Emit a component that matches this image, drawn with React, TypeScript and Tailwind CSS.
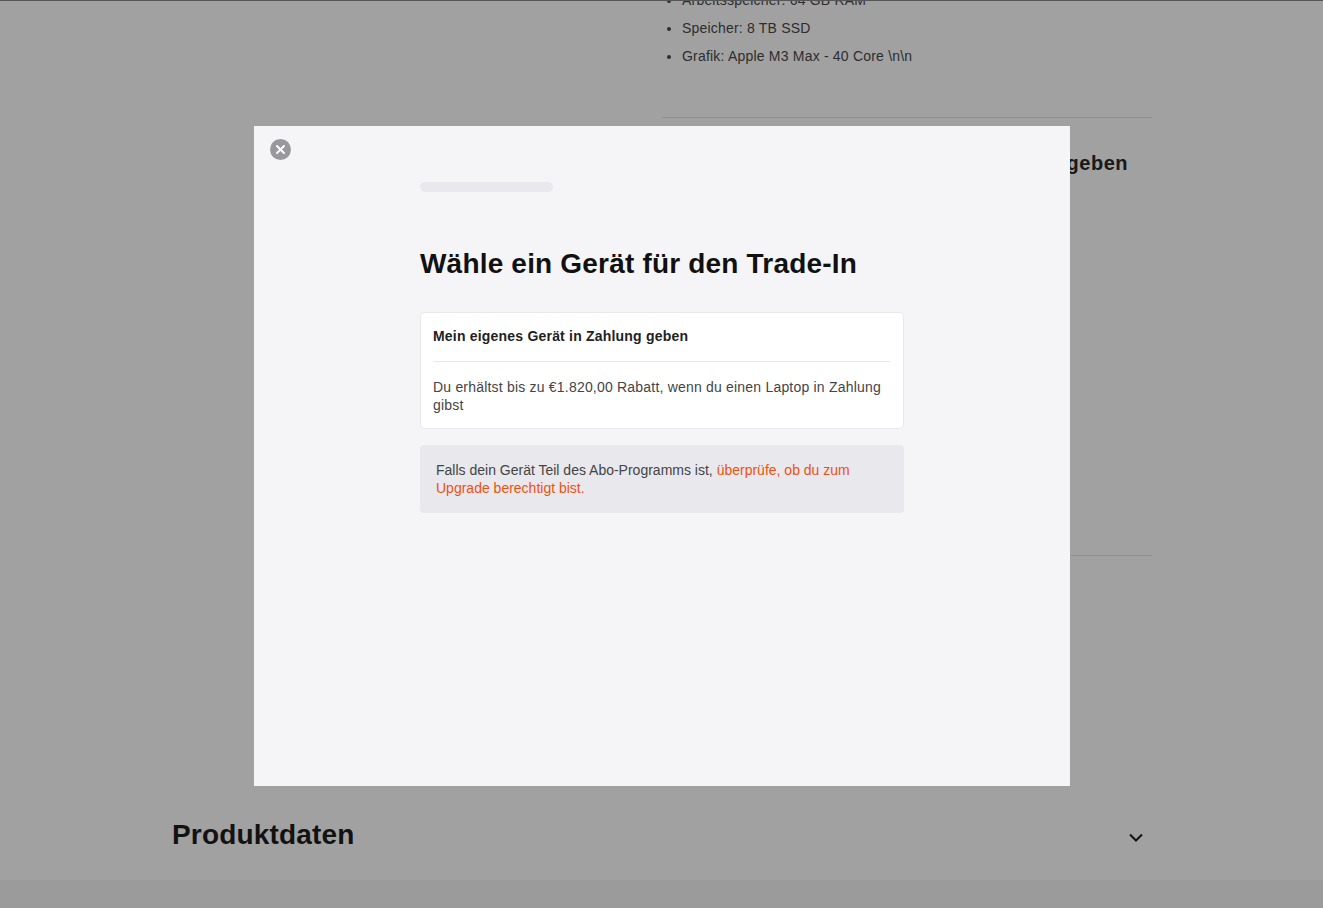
const font = { fontFamily: '"Liberation Sans", Arial, sans-serif' };

const CloseIcon = () => (
  <svg width="21" height="21" viewBox="0 0 21 21" className="block">
    <circle cx="10.5" cy="10.5" r="10.5" fill="#98989d" />
    <path d="M7 7l7 7M14 7l-7 7" stroke="#fff" strokeWidth="2" strokeLinecap="round" fill="none" />
  </svg>
);

const Chevron = () => (
  <svg width="14" height="9" viewBox="0 0 14 9" className="block">
    <path d="M1 1.5l6 6 6-6" stroke="#1d1d1f" strokeWidth="2" fill="none" />
  </svg>
);

const Background = () => (
  <div className="h-[908px] overflow-hidden bg-white flex flex-col border-t border-[#888]">
    <div className="h-[879px] shrink-0 pl-[172px] pr-[171px] flex flex-col">
      <div className="ml-[490px] h-[802px] shrink-0 text-[#4a4a4a]">
        <ul className="list-disc pl-5 text-[14px] leading-[20px] tracking-[0.2px] -mt-[11px] flex flex-col gap-2">
          <li>Arbeitsspeicher: 64 GB RAM</li>
          <li>Speicher: 8 TB SSD</li>
          <li>Grafik: Apple M3 Max - 40 Core \n\n</li>
        </ul>
        <div className="mt-[51px] border-t border-[#e5e5e5]" />
        <p className="mt-[31px] text-right pr-6 text-[20px] leading-[28px] font-bold tracking-[0.5px] text-[#2a2a2a]">
          Mein eigenes Gerät in Zahlung geben
        </p>
        <div className="mt-[378px] border-t border-[#e5e5e5]" />
      </div>
      <div className="flex items-center justify-between pr-[9.5px] mt-[14px]">
        <h2 className="text-[28px] leading-[36px] font-bold tracking-[0.17px] text-[#1d1d1f]">Produktdaten</h2>
        <div className="mt-1">
          <Chevron />
        </div>
      </div>
    </div>
    <div className="flex-1 bg-[#f5f5f7]" />
  </div>
);

export default function App() {
  return (
    <div style={font} className="relative h-[908px] overflow-hidden">
      <Background />
      <div className="absolute inset-0 bg-black/[0.37] pt-[126px] pl-[254px]">
        <div className="relative w-[816px] h-[660px] bg-[#f5f5f7] pt-[56px] pl-[166px]">
          <button className="absolute left-[16px] top-[12.5px]">
            <CloseIcon />
          </button>
          <div className="w-[133px] h-[10px] rounded-full bg-[#e8e8ed]" />
          <div className="w-[484px]">
            <h1 className="mt-[54px] text-[28px] leading-[36px] font-bold tracking-[0.19px] text-[#111]">
              Wähle ein Gerät für den Trade-In
            </h1>
            <div className="mt-[30px] bg-white border border-[#e8e8ed] rounded-[4px] px-3 pt-[14px] pb-[14px]">
              <p className="text-[14px] leading-[18px] font-bold tracking-[0.2px] text-[#222]">
                Mein eigenes Gerät in Zahlung geben
              </p>
              <div className="mt-4 mb-4 border-t border-[#e8e8ed]" />
              <p className="text-[14px] leading-[18px] tracking-[0.2px] text-[#444]">
                Du erhältst bis zu €1.820,00 Rabatt, wenn du einen Laptop in Zahlung gibst
              </p>
            </div>
            <div className="mt-4 bg-[#e8e8ed] rounded-[4px] px-4 py-4 text-[14px] leading-[18px] text-[#444]">
              Falls dein Gerät Teil des Abo-Programms ist,{" "}
              <a className="text-[#f0500f]">überprüfe, ob du zum Upgrade berechtigt bist.</a>
            </div>
          </div>
        </div>
      </div>
    </div>
  );
}
